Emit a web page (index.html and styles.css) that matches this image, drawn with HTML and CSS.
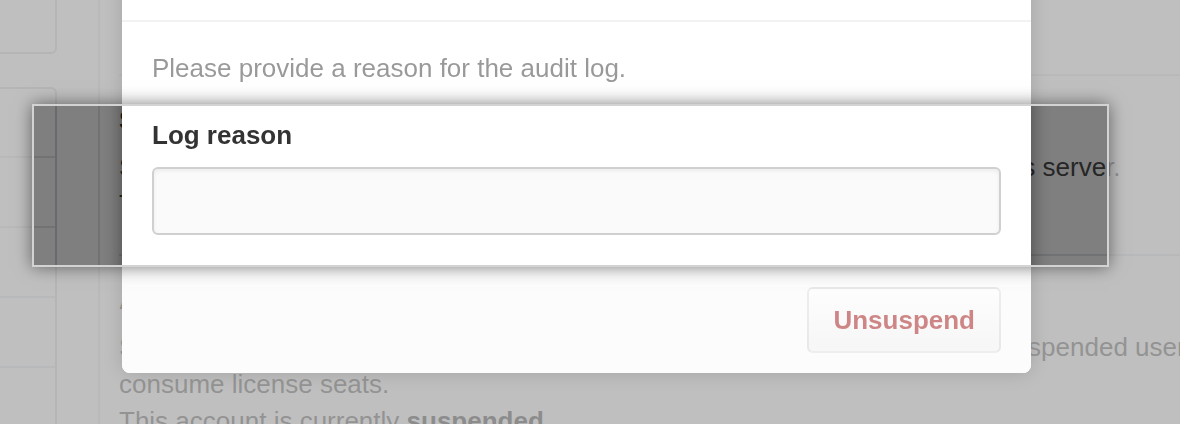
FILE: index.html
```html
<!DOCTYPE html>
<html lang="en">
<head>
<meta charset="utf-8">
<title>Unsuspend user</title>
<link rel="stylesheet" href="styles.css">
</head>
<body>
<div class="page">
  <aside class="sidebar">
    <div class="menu menu-top"></div>
    <nav class="menu menu-nav">
      <div class="menu-item"></div>
      <div class="menu-item"></div>
      <div class="menu-item"></div>
      <div class="menu-item"></div>
      <div class="menu-item"></div>
    </nav>
  </aside>
  <main class="main">
    <section class="section">
      <h2 class="section-title">Suspension</h2>
      <p class="line">Suspended users cannot sign in, push or pull code from any repositories on this server.</p>
      <p class="line">The user keeps their account, repositories and data.</p>
    </section>
    <section class="section">
      <h2 class="section-title">Account status</h2>
      <p class="line">Suspending an account immediately signs the user out of any sessions, and suspended users do not</p>
      <p class="line">consume license seats.</p>
      <p class="line">This account is currently <strong>suspended</strong>.</p>
    </section>
  </main>
</div>
<div class="backdrop"></div>
<div class="modal" role="dialog" aria-labelledby="modal-title">
  <div class="modal-header"><h3 class="modal-title" id="modal-title">Unsuspend user</h3></div>
  <div class="modal-body">
    <p class="modal-text">Please provide a reason for the audit log.</p>
    <label class="field-label" for="reason">Log reason</label>
    <input id="reason" class="field-input" type="text">
  </div>
  <div class="modal-footer">
    <button class="btn-danger" type="button">Unsuspend</button>
  </div>
</div>
<div class="spotlight"></div>
</body>
</html>
```

FILE: styles.css
```css
html, body {
  margin: 0;
  padding: 0;
}

body {
  width: 1180px;
  height: 424px;
  overflow: hidden;
  background: #fff;
  font-family: "Liberation Sans", Arial, Helvetica, sans-serif;
  font-size: 26px;
  color: #333;
}

/* ---------- underlying page ---------- */
.page {
  display: flex;
  min-height: 424px;
}

.sidebar {
  flex: none;
  width: 57px;
}

.menu {
  box-sizing: border-box;
  border: 2px solid #d1d5da;
  border-left: 0;
  border-radius: 0 6px 6px 0;
  background: #fff;
}

.menu-top {
  height: 74px;
  margin-top: -20px;
}

.menu-nav {
  margin-top: 33px;
}

.menu-item {
  height: 67px;
}

.menu-item + .menu-item {
  height: 68px;
  border-top: 2px solid #e1e4e8;
}

.main {
  flex: 1;
  margin-left: 41px;
  border-left: 2px solid #e1e4e8;
  padding: 74px 0 0 19px;
  min-width: 0;
}

.section {
  border-top: 2px solid #e1e4e8;
  padding: 26px 0 31px;
}

.section-title {
  margin: 0 0 10px;
  font-size: 26px;
  line-height: 37px;
  font-weight: bold;
  color: #333;
}

.line {
  margin: 0;
  line-height: 37px;
  white-space: nowrap;
  color: #4c4c4c;
}

.line strong {
  color: #333;
}

/* ---------- modal ---------- */
.backdrop {
  position: fixed;
  inset: 0;
  background: rgba(0, 0, 0, 0.5);
  z-index: 1;
}

.modal {
  position: fixed;
  left: 122px;
  top: -60px;
  width: 909px;
  background: #fff;
  border-radius: 8px;
  overflow: hidden;
  box-shadow: 0 0 20px rgba(0, 0, 0, 0.45);
  z-index: 2;
}

.modal-header {
  box-sizing: border-box;
  height: 82px;
  display: flex;
  align-items: center;
  padding: 0 30px;
  border-bottom: 2px solid #e1e4e8;
}

.modal-title {
  margin: 0;
  font-size: 26px;
  font-weight: bold;
  color: #333;
}

.modal-body {
  padding: 27px 30px 30px;
}

.modal-text {
  margin: 0 0 28px;
  line-height: 39px;
  color: #333;
}

.field-label {
  display: block;
  margin: 0 0 12px;
  line-height: 39px;
  font-weight: bold;
  color: #333;
}

.field-input {
  display: block;
  box-sizing: border-box;
  width: 100%;
  height: 68px;
  margin: 0;
  padding: 0 16px;
  border: 2px solid #d0d0d0;
  border-radius: 6px;
  background: #fafafa;
  box-shadow: inset 0 2px 4px rgba(0, 0, 0, 0.06);
  font: inherit;
  color: #333;
}

.modal-footer {
  display: flex;
  justify-content: flex-end;
  padding: 20px 30px;
  background: #f8f8f8;
  border-top: 2px solid #e1e4e8;
}

.btn-danger {
  box-sizing: border-box;
  height: 66px;
  padding: 0 24px;
  border: 2px solid rgba(0, 0, 0, 0.12);
  border-radius: 6px;
  background: linear-gradient(180deg, #fbfbfb, #eeeeee 90%);
  font-family: "Liberation Sans", Arial, Helvetica, sans-serif;
  font-size: 26px;
  font-weight: bold;
  color: #9c0a0a;
  line-height: 1;
}

/* ---------- annotation highlight ---------- */
.spotlight {
  position: fixed;
  left: 32px;
  top: 104px;
  width: 1077px;
  height: 163px;
  box-sizing: border-box;
  border: 2px solid #d3d3d3;
  box-shadow: 0 0 16px rgba(0, 0, 0, 0.5), 0 0 0 4000px rgba(255, 255, 255, 0.5);
  z-index: 3;
}
```
